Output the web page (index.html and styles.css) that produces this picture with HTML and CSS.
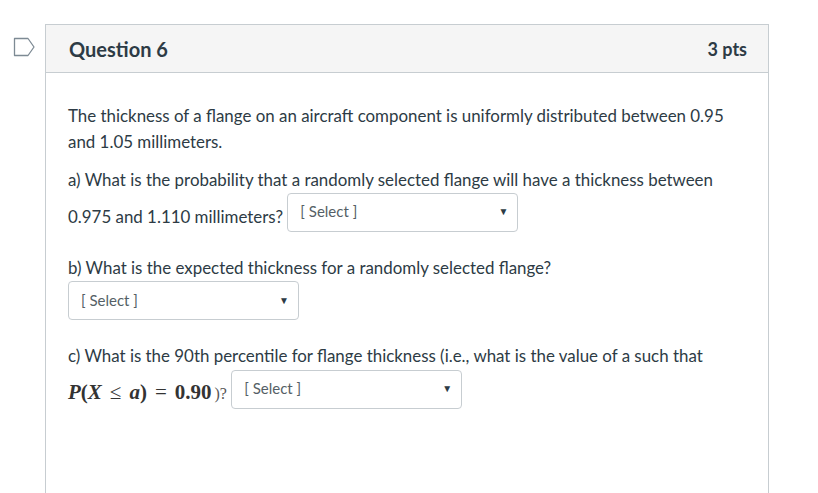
FILE: index.html
```html
<!DOCTYPE html>
<html lang="en">
<head>
<meta charset="utf-8">
<title>Question 6</title>
<link rel="stylesheet" href="styles.css">
</head>
<body>
<div class="page">
  <div class="flag-col">
    <svg class="flag" width="23" height="20" viewBox="0 0 23 20" aria-hidden="true">
      <path d="M1.5 1.5 H15 L21 10 L15 18.5 H1.5 Z" fill="none" stroke="#7d8a94" stroke-width="1.3" stroke-linejoin="round"/>
    </svg>
  </div>
  <section class="card">
    <header class="card-head">
      <h2 class="q-title">Question 6</h2>
      <span class="q-pts">3 pts</span>
    </header>
    <div class="card-body">
      <p class="txt">The thickness of a flange on an aircraft component is uniformly distributed between 0.95<br>and 1.05 millimeters.</p>
      <p class="txt part">a) What is the probability that a randomly selected flange will have a thickness between<br>0.975 and 1.110 millimeters? <span class="sel"><span class="sel-label">[ Select ]</span><span class="sel-arrow">&#9660;</span></span></p>
      <p class="txt part">b) What is the expected thickness for a randomly selected flange?<br><span class="sel sel-block"><span class="sel-label">[ Select ]</span><span class="sel-arrow">&#9660;</span></span></p>
      <p class="txt part">c) What is the 90th percentile for flange thickness (i.e., what is the value of a such that<br><span class="math"><i>P</i>(<i>X</i><span class="op">&le;</span><i>a</i>)<span class="op">=</span>0.90</span><span class="small">)?</span> <span class="sel sel-c"><span class="sel-label">[ Select ]</span><span class="sel-arrow">&#9660;</span></span></p>
    </div>
  </section>
</div>
</body>
</html>
```

FILE: styles.css
```css
html, body {
  margin: 0;
  height: 100%;
  overflow: hidden;
  background: #ffffff;
}

body {
  font-family: Lato, "Open Sans", sans-serif;
  color: #2d3b45;
}

.page {
  display: flex;
  padding-top: 24px;
}

.flag-col {
  width: 45px;
  flex: none;
  box-sizing: border-box;
  padding-left: 13px;
  padding-top: 13px;
}

.flag {
  display: block;
}

.card {
  width: 724px;
  min-height: 600px;
  box-sizing: border-box;
  border: 1px solid #c7cdd1;
  border-bottom: none;
}

.card-head {
  height: 47px;
  background: #f5f5f5;
  border-bottom: 1px solid #c7cdd1;
  display: flex;
  align-items: center;
  justify-content: space-between;
  padding: 0 21px 0 23px;
}

.q-title {
  margin: 0;
  font-size: 20px;
  font-weight: 700;
}

.q-pts {
  font-size: 18px;
  font-weight: 700;
}

.card-body {
  padding: 30px 22px 0 22px;
}

.txt {
  margin: 0 0 13px 0;
  font-size: 16.9px;
  line-height: 25.5px;
}

.part + .part {
  margin-top: 23px;
}

.sel {
  display: inline-flex;
  align-items: center;
  justify-content: space-between;
  width: 231px;
  height: 39px;
  box-sizing: border-box;
  border: 1px solid #c7cdd1;
  border-radius: 4px;
  background: #fff;
  padding: 0 9px 0 12px;
  vertical-align: 5px;
}

.sel-block {
  margin-top: 1px;
}

.sel-c {
  margin-top: 1px;
}

.sel-label {
  font-size: 15px;
  color: #555f66;
}

.sel-arrow {
  font-size: 10px;
  color: #2d3b45;
}

.math {
  font-family: "Liberation Serif", "Times New Roman", serif;
  font-size: 21px;
  font-weight: 700;
  color: #333;
}

.math i {
  font-style: italic;
}

.op {
  margin: 0 8px;
  font-weight: 400;
}

.small {
  font-family: "Liberation Serif", serif;
  font-size: 16px;
  color: #555;
  margin-left: 3px;
}
```
